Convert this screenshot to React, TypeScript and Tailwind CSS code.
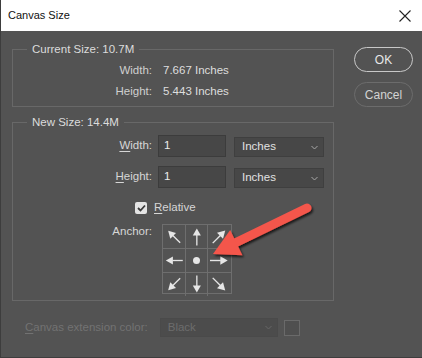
import React from 'react';

const font = { fontFamily: '"Liberation Sans", Arial, sans-serif' };

const Chevron = ({ color = '#a8a8a8' }: { color?: string }) => (
  <svg width="7" height="5" viewBox="0 0 7 5">
    <path d="M0.5 1 L3.5 4 L6.5 1" fill="none" stroke={color} strokeWidth="1" />
  </svg>
);

const Select = ({ value, className }: { value: string; className?: string }) => (
  <div
    className={`flex items-center justify-between bg-[#474747] border border-[#3f3f3f] pl-[7px] pr-[5px] text-[#e2e2e2] ${className ?? ''}`}
  >
    <span>{value}</span>
    <Chevron />
  </div>
);

// an "up" arrow rotated around the cell centre
const CellArrow = ({ angle }: { angle: number }) => (
  <svg width="23" height="23" viewBox="0 0 23 23">
    <g transform={`rotate(${angle} 11.5 11.5)`} fill="#e6e6e6" stroke="#e6e6e6">
      <line x1="11.5" y1="10" x2="11.5" y2="21" strokeWidth="1.4" />
      <polygon points="11.5,3 7.2,10.5 15.8,10.5" stroke="none" />
    </g>
  </svg>
);

const Group = ({ title, className, children }: { title: string; className?: string; children: React.ReactNode }) => (
  <div className={`relative border border-[#686868] ${className ?? ''}`}>
    <span className="absolute -top-[9px] left-[14px] bg-[#535353] px-[5px] leading-[16px] text-[#dcdcdc]">{title}</span>
    {children}
  </div>
);

export default function App() {
  const anchors = [-45, 0, 45, -90, null, 90, -135, 180, 135];

  return (
    <div
      className="relative w-[422px] h-[358px] bg-[#535353] border-l border-b border-[#3d3d3d] flex flex-col text-[11.5px] overflow-hidden"
      style={font}
    >
      {/* title bar */}
      <div className="h-[31px] shrink-0 bg-white flex items-center justify-between pl-[7px] pr-[11px] text-[11px] text-[#111]">
        <span>Canvas Size</span>
        <svg width="12" height="12" viewBox="0 0 12 12">
          <path d="M0.5 0.5 L11.5 11.5 M11.5 0.5 L0.5 11.5" stroke="#222" strokeWidth="1.1" />
        </svg>
      </div>

      <div className="flex pl-[11px] pt-[18px]">
        <div className="w-[322px] flex flex-col">
          <Group title="Current Size: 10.7M" className="h-[58px]">
            <div className="pt-[12px] flex flex-col gap-[4px] text-[#cfcfcf]">
              <div className="flex h-[17px] items-center">
                <span className="w-[139px] text-right">Width:</span>
                <span className="ml-[11px] text-[#dedede]">7.667 Inches</span>
              </div>
              <div className="flex h-[17px] items-center">
                <span className="w-[139px] text-right">Height:</span>
                <span className="ml-[11px] text-[#dedede]">5.443 Inches</span>
              </div>
            </div>
          </Group>

          <Group title="New Size: 14.4M" className="mt-[15px] h-[179px]">
            <div className="pt-[12px] flex flex-col text-[#d6d6d6]">
              <div className="flex h-[22px] items-center">
                <span className="w-[139px] text-right">
                  <span className="underline underline-offset-2">W</span>idth:
                </span>
                <div className="ml-[6px] w-[68px] h-[22px] bg-[#474747] border border-[#3c3c3c] pl-[5px] flex items-center text-[#ececec]">1</div>
                <Select value="Inches" className="ml-[8px] w-[90px] h-[20px] mt-[2px]" />
              </div>
              <div className="flex h-[22px] items-center mt-[9px]">
                <span className="w-[139px] text-right">
                  <span className="underline underline-offset-2">H</span>eight:
                </span>
                <div className="ml-[6px] w-[68px] h-[22px] bg-[#474747] border border-[#3c3c3c] pl-[5px] flex items-center text-[#ececec]">1</div>
                <Select value="Inches" className="ml-[8px] w-[90px] h-[20px] mt-[2px]" />
              </div>
              <div className="flex h-[13px] items-center mt-[13px] pl-[122px]">
                <span className="w-[12px] h-[12px] rounded-[2px] bg-[#e4e4e4] flex items-center justify-center">
                  <svg width="9" height="8" viewBox="0 0 9 8">
                    <path d="M1 4 L3.5 6.5 L8 1.5" fill="none" stroke="#3a3a3a" strokeWidth="1.8" />
                  </svg>
                </span>
                <span className="ml-[7px]">
                  <span className="underline underline-offset-2">R</span>elative
                </span>
              </div>
              <div className="flex mt-[10px]">
                <span className="w-[139px] text-right leading-[14px]">Anchor:</span>
                <div className="ml-[10px] grid grid-cols-3 w-[70px] h-[70px] border border-[#6e6e6e]">
                  {anchors.map((a, i) => (
                    <div
                      key={i}
                      className={`flex items-center justify-center border-[#6e6e6e] ${i % 3 !== 2 ? 'border-r' : ''} ${i < 6 ? 'border-b' : ''}`}
                    >
                      {a === null ? (
                        <span className="w-[7px] h-[7px] rounded-full bg-[#e6e6e6]" />
                      ) : (
                        <CellArrow angle={a} />
                      )}
                    </div>
                  ))}
                </div>
              </div>
            </div>
          </Group>

          <div className="flex items-center mt-[17px] pl-[13px] text-[#727272]">
            <span>
              <span className="underline underline-offset-2">C</span>anvas extension color:
            </span>
            <div className="ml-[12px] w-[118px] h-[19px] bg-[#4c4c4c] border border-[#4a4a4a] flex items-center justify-between pl-[7px] pr-[5px] text-[#6c6c6c]">
              <span>Black</span>
              <Chevron color="#666" />
            </div>
            <span className="ml-[6px] w-[16px] h-[16px] border border-[#6a6a6a] bg-[#4f4f4f]" />
          </div>
        </div>

        <div className="ml-[20px] flex flex-col gap-[10px] -mt-[2px]">
          <button className="w-[59px] h-[25px] rounded-full border border-[#c8c8c8] text-[#e8e8e8] text-[12px]">OK</button>
          <button className="w-[59px] h-[25px] rounded-full border border-[#6c6c6c] text-[#d4d4d4] text-[12px]">Cancel</button>
        </div>
      </div>

      {/* red annotation arrow */}
      <svg className="absolute left-0 top-0 pointer-events-none" width="422" height="358" viewBox="0 0 422 358">
        <defs>
          <filter id="sh" x="-20%" y="-20%" width="140%" height="140%">
            <feDropShadow dx="1.5" dy="2" stdDeviation="1.2" floodColor="#000" floodOpacity="0.7" />
          </filter>
        </defs>
        <g filter="url(#sh)" fill="#f4564b">
          <line x1="306" y1="208" x2="234" y2="243" stroke="#f4564b" strokeWidth="9" strokeLinecap="round" />
          <polygon points="212,254 229.2,230 241.4,255.2" />
        </g>
      </svg>
    </div>
  );
}
